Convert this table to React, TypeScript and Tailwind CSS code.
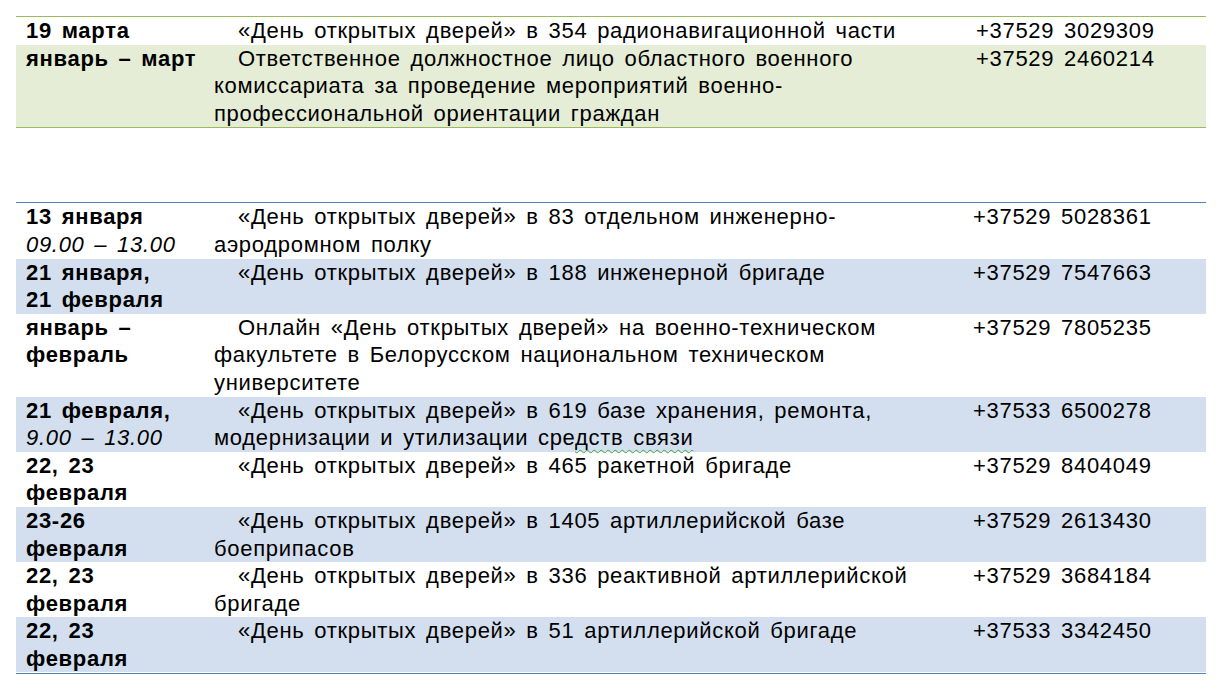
import React from "react";

type Row = {
  date: React.ReactNode;
  text: React.ReactNode;
  phone: string;
  shaded?: boolean;
};

const topRows: Row[] = [
  {
    date: <b>19 марта</b>,
    text: <>«День открытых дверей» в 354 радионавигационной части</>,
    phone: "+37529 3029309",
  },
  {
    date: <b>январь – март</b>,
    text: (
      <>
        Ответственное должностное лицо областного военного
        <br />
        комиссариата за проведение мероприятий военно-
        <br />
        профессиональной ориентации граждан
      </>
    ),
    phone: "+37529 2460214",
    shaded: true,
  },
];

const rows: Row[] = [
  {
    date: (
      <>
        <b>13 января</b>
        <br />
        <i>09.00 – 13.00</i>
      </>
    ),
    text: (
      <>
        «День открытых дверей» в 83 отдельном инженерно-
        <br />
        аэродромном полку
      </>
    ),
    phone: "+37529 5028361",
  },
  {
    date: (
      <b>
        21 января,
        <br />
        21 февраля
      </b>
    ),
    text: <>«День открытых дверей» в 188 инженерной бригаде</>,
    phone: "+37529 7547663",
    shaded: true,
  },
  {
    date: (
      <b>
        январь –
        <br />
        февраль
      </b>
    ),
    text: (
      <>
        Онлайн «День открытых дверей» на военно-техническом
        <br />
        факультете в Белорусском национальном техническом
        <br />
        университете
      </>
    ),
    phone: "+37529 7805235",
  },
  {
    date: (
      <>
        <b>21 февраля,</b>
        <br />
        <i>9.00 – 13.00</i>
      </>
    ),
    text: (
      <>
        «День открытых дверей» в 619 базе хранения, ремонта,
        <br />
        модернизации и утилизации сре
        <span className="underline decoration-wavy decoration-[#3aa63a] decoration-1 underline-offset-[4px]">дств связи</span>
      </>
    ),
    phone: "+37533 6500278",
    shaded: true,
  },
  {
    date: (
      <b>
        22, 23
        <br />
        февраля
      </b>
    ),
    text: <>«День открытых дверей» в 465 ракетной бригаде</>,
    phone: "+37529 8404049",
  },
  {
    date: (
      <b>
        23-26
        <br />
        февраля
      </b>
    ),
    text: (
      <>
        «День открытых дверей» в 1405 артиллерийской базе
        <br />
        боеприпасов
      </>
    ),
    phone: "+37529 2613430",
    shaded: true,
  },
  {
    date: (
      <b>
        22, 23
        <br />
        февраля
      </b>
    ),
    text: (
      <>
        «День открытых дверей» в 336 реактивной артиллерийской
        <br />
        бригаде
      </>
    ),
    phone: "+37529 3684184",
  },
  {
    date: (
      <b>
        22, 23
        <br />
        февраля
      </b>
    ),
    text: <>«День открытых дверей» в 51 артиллерийской бригаде</>,
    phone: "+37533 3342450",
    shaded: true,
  },
];

function TableRow({ row, fill, phonePad }: { row: Row; fill: string; phonePad: string }) {
  return (
    <div className={`grid grid-cols-[198px_759px_1fr] ${row.shaded ? fill : "bg-white"}`}>
      <div className="pl-[10px]">{row.date}</div>
      <div className="indent-[24px]">{row.text}</div>
      <div className={phonePad}>{row.phone}</div>
    </div>
  );
}

export default function App() {
  return (
    <div
      className="w-[1222px] h-[693px] bg-white text-black text-[22px] tracking-[0.7px] [word-spacing:3px] leading-[27.6px] px-[16px] pt-[16px]"
      style={{ fontFamily: '"Liberation Sans", Arial, sans-serif' }}
    >
      {/* first table, green */}
      <div className="border-y border-[#9bbb59]">
        {topRows.map((r, i) => (
          <TableRow key={i} row={r} fill="bg-[#e5edd6]" phonePad="pl-[3px]" />
        ))}
      </div>

      <div className="h-[74px]" />

      {/* second table, blue */}
      <div className="border-t border-[#4f81bd]">
        {rows.map((r, i) => (
          <TableRow key={i} row={r} fill="bg-[#d3dfee]" phonePad="" />
        ))}
      </div>
      <div className="mt-[1px] border-t border-[#4f81bd]" />
    </div>
  );
}
